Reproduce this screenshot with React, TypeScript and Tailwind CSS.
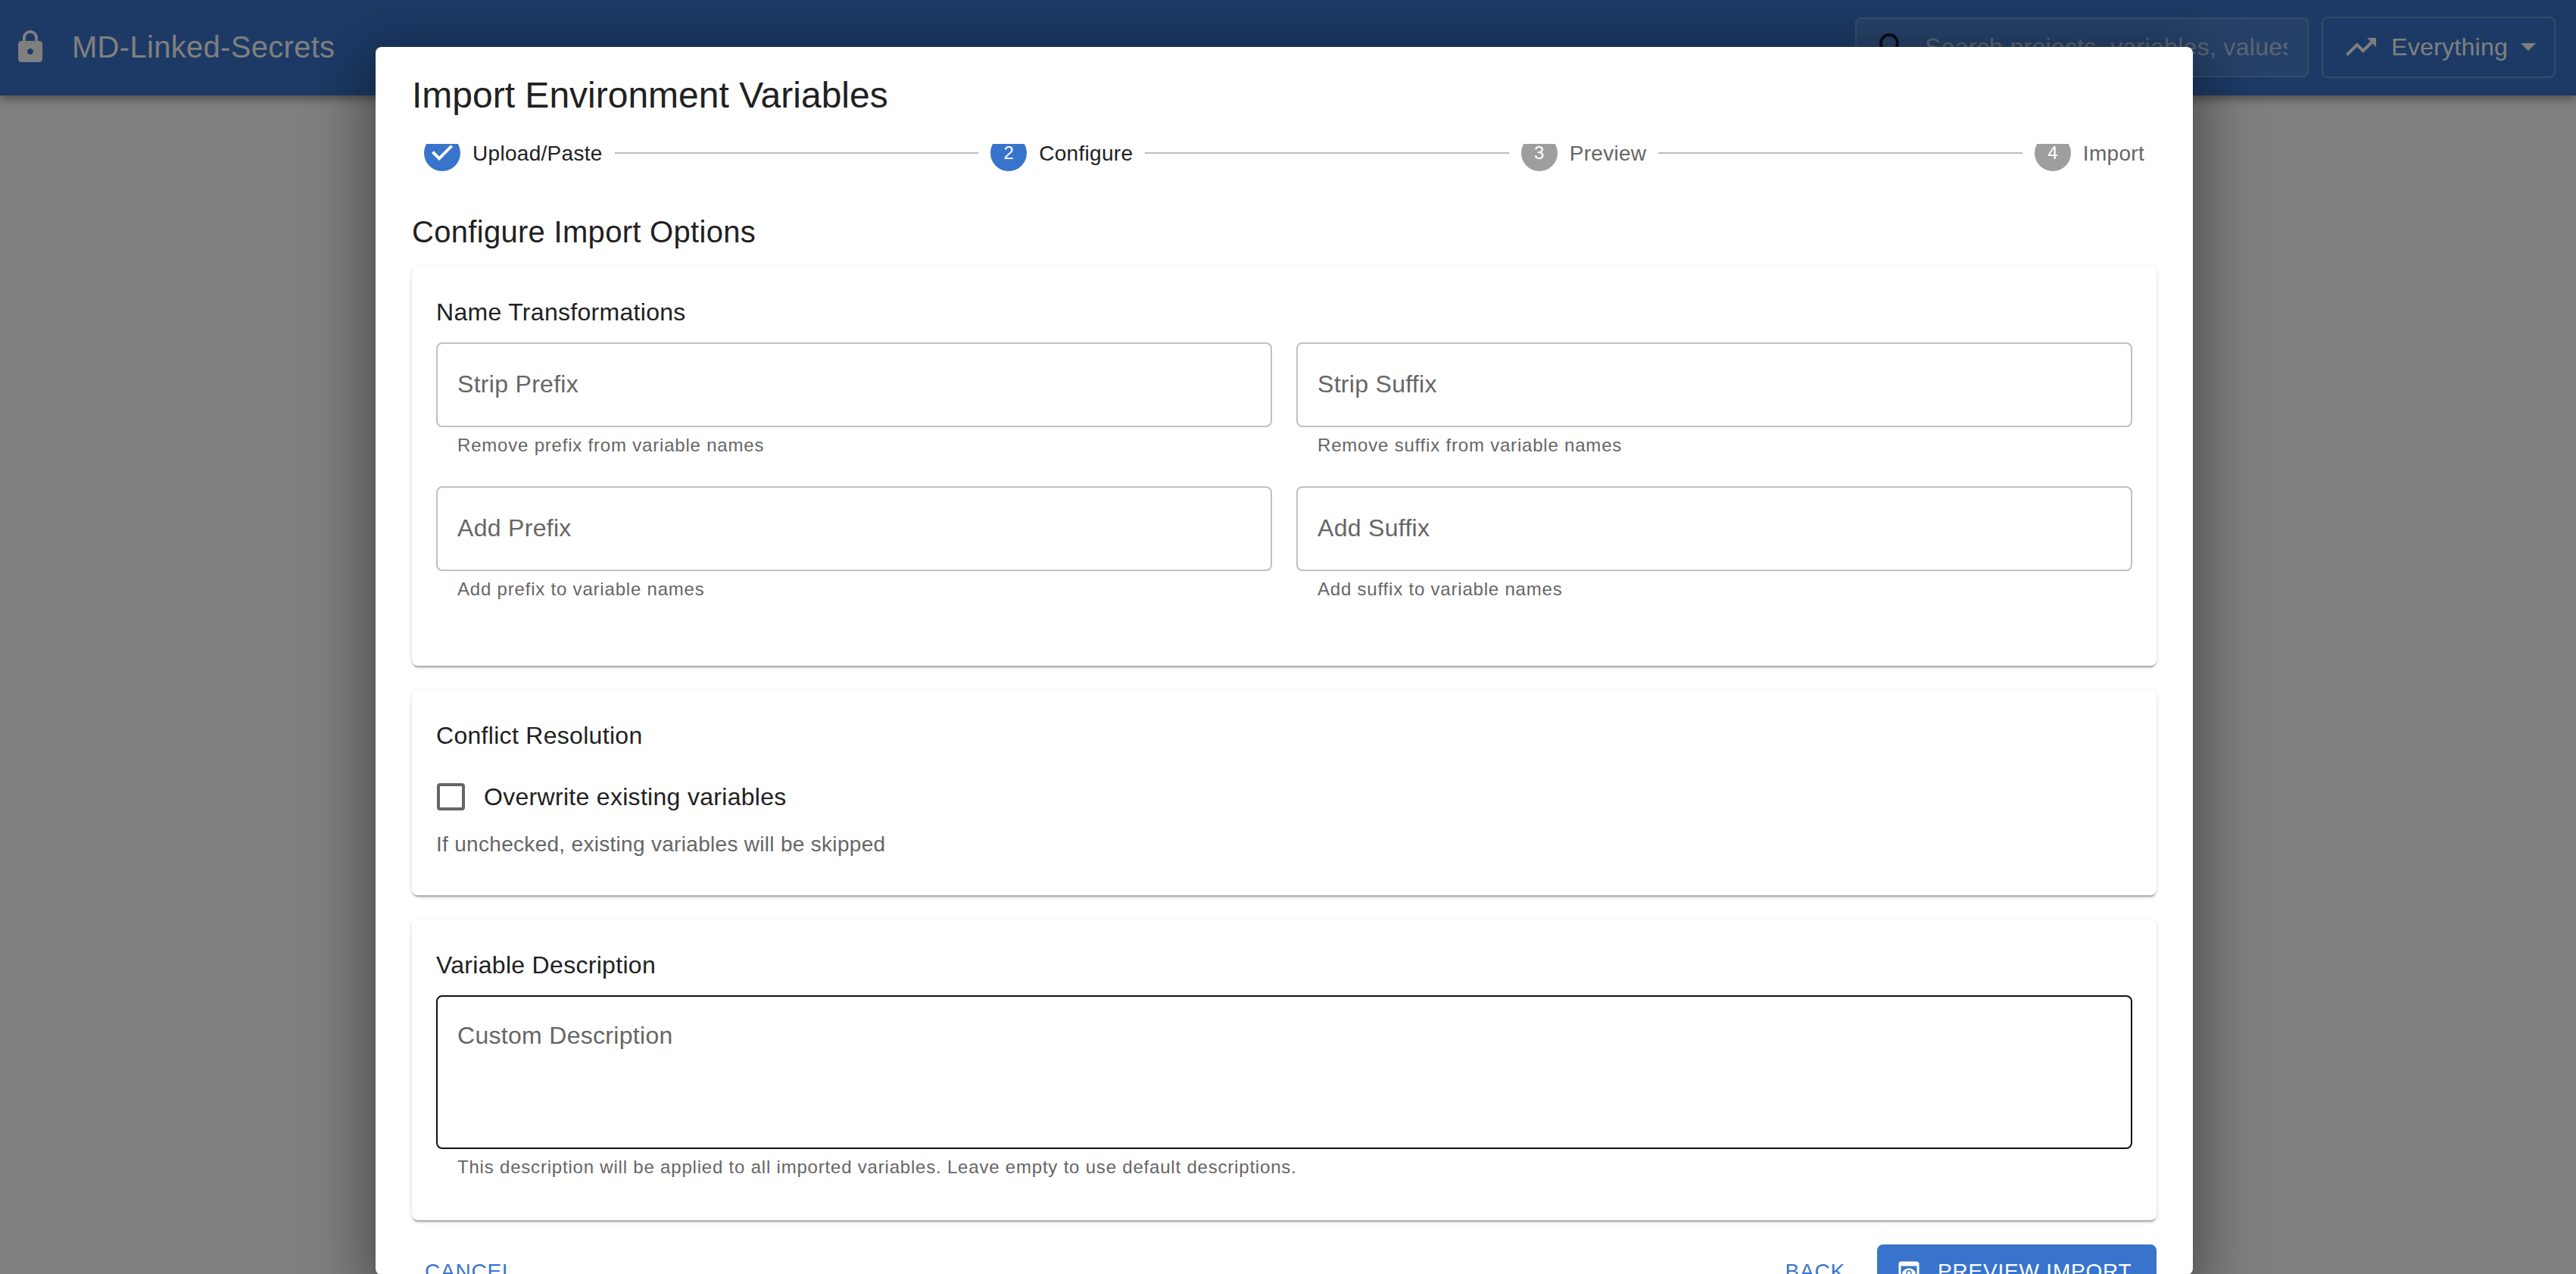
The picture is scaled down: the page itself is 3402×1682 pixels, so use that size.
const lockPath =
  "M18 8h-1V6c0-2.76-2.24-5-5-5S7 3.24 7 6v2H6c-1.1 0-2 .9-2 2v10c0 1.1.9 2 2 2h12c1.1 0 2-.9 2-2V10c0-1.1-.9-2-2-2zm-6 9c-1.1 0-2-.9-2-2s.9-2 2-2 2 .9 2 2-.9 2-2 2zm3.1-9H8.9V6c0-1.71 1.39-3.1 3.1-3.1 1.71 0 3.1 1.39 3.1 3.1v2z";
const searchPath =
  "M15.5 14h-.79l-.28-.27C15.41 12.59 16 11.11 16 9.5 16 5.91 13.09 3 9.5 3S3 5.91 3 9.5 5.91 16 9.5 16c1.61 0 3.09-.59 4.23-1.57l.27.28v.79l5 4.99L20.49 19l-4.99-5zm-6 0C7.01 14 5 11.99 5 9.5S7.01 5 9.5 5 14 7.01 14 9.5 11.99 14 9.5 14z";
const trendPath = "m16 6 2.29 2.29-4.88 4.88-4-4L2 16.59 3.41 18l6-6 4 4 6.3-6.29L22 12V6z";
const previewPath =
  "M19 3H5c-1.11 0-2 .9-2 2v14c0 1.1.89 2 2 2h14c1.1 0 2-.9 2-2V5c0-1.1-.89-2-2-2zm0 16H5V7h14v12zm-5.5-6c0 .83-.67 1.5-1.5 1.5s-1.5-.67-1.5-1.5.67-1.5 1.5-1.5 1.5.67 1.5 1.5zM12 9c-2.73 0-5.06 1.66-6 4 .94 2.34 3.27 4 6 4s5.06-1.66 6-4c-.94-2.34-3.27-4-6-4zm0 6.5c-1.38 0-2.5-1.12-2.5-2.5s1.12-2.5 2.5-2.5 2.5 1.12 2.5 2.5-1.12 2.5-2.5 2.5z";
const doneCirclePath = "M12 0a12 12 0 1 0 0 24 12 12 0 0 0 0-24zm-2 17l-5-5 1.4-1.4 3.6 3.6 7.6-7.6L19 8l-9 9z";

function Icon({ d, className }: { d: string; className?: string }) {
  return (
    <svg viewBox="0 0 24 24" fill="currentColor" className={className}>
      <path d={d} />
    </svg>
  );
}

function Field({ label, helper }: { label: string; helper: string }) {
  return (
    <div>
      <div className="h-[112px] flex items-center px-[26px] pb-[3px] border-2 border-[#c0c0c0] rounded-[8px] text-[32px] tracking-[0.3px] text-[#666666]">
        {label}
      </div>
      <p className="mt-[4px] px-[28px] text-[24px] leading-[40px] tracking-[0.8px] text-[#666666]">{helper}</p>
    </div>
  );
}

function Card({ title, className, children }: { title: string; className?: string; children: React.ReactNode }) {
  return (
    <section
      className={`rounded-[8px] bg-white px-[32px] pt-[32px] shadow-[0_4px_2px_-2px_rgba(0,0,0,0.2),0_2px_2px_0_rgba(0,0,0,0.14),0_2px_6px_0_rgba(0,0,0,0.12)] ${className ?? ""}`}
    >
      <h3 className="text-[32px] leading-[56px] tracking-[0.3px] text-[#212121] mb-[12px]">{title}</h3>
      {children}
    </section>
  );
}

function Step({ n, label, state }: { n: number; label: string; state: "done" | "active" | "todo" }) {
  return (
    <div className="flex items-center gap-[16px] shrink-0">
      {state === "done" ? (
        <Icon d={doneCirclePath} className="w-[48px] h-[48px] text-[#3874cb]" />
      ) : (
        <span
          className={`w-[48px] h-[48px] rounded-full flex items-center justify-center text-white text-[24px] ${
            state === "active" ? "bg-[#3874cb]" : "bg-[#9e9e9e]"
          }`}
        >
          {n}
        </span>
      )}
      <span className={`text-[28px] tracking-[0.3px] pt-[2px] ${state === "todo" ? "text-[#666666]" : "text-[#212121]"}`}>
        {label}
      </span>
    </div>
  );
}

function Line() {
  return <div className="flex-1 h-[2px] mx-[16px] bg-[#bdbdbd]" />;
}

export default function App() {
  return (
    <div className="relative h-[1682px] w-full overflow-hidden bg-white font-['Liberation_Sans',Arial,sans-serif]">
      {/* app bar */}
      <header className="h-[126px] pb-[2px] bg-[#3874cb] text-white flex items-center pl-[16px] pr-[27px] shadow-[0_4px_8px_-2px_rgba(0,0,0,0.2),0_8px_10px_0_rgba(0,0,0,0.14),0_2px_20px_0_rgba(0,0,0,0.12)]">
        <Icon d={lockPath} className="w-[48px] h-[48px]" />
        <span className="ml-[31px] text-[40px] tracking-[0.3px]">MD-Linked-Secrets</span>
        <div className="ml-auto flex items-center gap-[17px]">
          <div className="w-[599px] h-[79px] flex items-center pl-[24px] pr-[26px] border-2 border-white/20 rounded-[8px] bg-white/10">
            <Icon d={searchPath} className="w-[48px] h-[48px] text-[#0c1a30] shrink-0" />
            <span className="ml-[18px] text-[32px] tracking-[0.3px] text-white/60 whitespace-nowrap overflow-hidden">
              Search projects, variables, values, and more
            </span>
          </div>
          <div className="w-[309px] h-[81px] flex items-center pl-[26px] border-2 border-white/25 rounded-[8px]">
            <Icon d={trendPath} className="w-[48px] h-[48px] shrink-0" />
            <span className="ml-[16px] text-[32px] tracking-[0.3px]">Everything</span>
            <svg viewBox="0 0 20 10" fill="currentColor" className="ml-[17px] w-[20px] h-[10px]">
              <path d="M0 0h20L10 10z" />
            </svg>
          </div>
        </div>
      </header>

      {/* backdrop */}
      <div className="absolute inset-0 bg-black/50" />

      {/* dialog */}
      <div className="absolute left-[496px] top-[62px] w-[2400px] h-[1621px] rounded-[8px] bg-white overflow-hidden flex flex-col shadow-[0_22px_76px_14px_rgba(0,0,0,0.4)]">
        <h2 className="h-[128px] shrink-0 pl-[48px] pt-[32px] text-[48px] leading-[64px] text-[#212121]">
          Import Environment Variables
        </h2>
        <div className="overflow-hidden shrink-0">
          <div className="-mt-[12px] px-[48px] pb-[16px]">
            <div className="flex items-center h-[48px] px-[16px]">
              <Step n={1} label="Upload/Paste" state="done" />
              <Line />
              <Step n={2} label="Configure" state="active" />
              <Line />
              <Step n={3} label="Preview" state="todo" />
              <Line />
              <Step n={4} label="Import" state="todo" />
            </div>
            <h3 className="mt-[56px] text-[40px] leading-[48px] tracking-[0.3px] text-[#212121]">Configure Import Options</h3>
            <div className="mt-[22px] flex flex-col gap-[32px]">
              <Card title="Name Transformations" className="pb-[81px]">
                <div className="grid grid-cols-2 gap-x-[32px] gap-y-[34px]">
                  <Field label="Strip Prefix" helper="Remove prefix from variable names" />
                  <Field label="Strip Suffix" helper="Remove suffix from variable names" />
                  <Field label="Add Prefix" helper="Add prefix to variable names" />
                  <Field label="Add Suffix" helper="Add suffix to variable names" />
                </div>
              </Card>
              <Card title="Conflict Resolution" className="pb-[47px]">
                <div className="mt-[29px] flex items-center gap-[25px]">
                  <span className="w-[37px] h-[36px] ml-[1px] rounded-[4px] border-4 border-[#666666]" />
                  <span className="text-[32px] tracking-[0.3px] text-[#212121]">Overwrite existing variables</span>
                </div>
                <p className="mt-[19px] text-[28px] leading-[40px] tracking-[0.3px] text-[#666666]">
                  If unchecked, existing variables will be skipped
                </p>
              </Card>
              <Card title="Variable Description" className="pb-[50px]">
                <div className="h-[203px] px-[26px] pt-[33px] border-2 border-[#111111] rounded-[8px] text-[32px] leading-[36px] tracking-[0.3px] text-[#666666]">
                  Custom Description
                </div>
                <p className="mt-[4px] px-[28px] text-[24px] leading-[40px] tracking-[0.8px] text-[#666666]">
                  This description will be applied to all imported variables. Leave empty to use default descriptions.
                </p>
              </Card>
            </div>
          </div>
        </div>
        <footer className="mt-[16px] pl-[48px] pr-[48px] flex items-center shrink-0">
          <button className="h-[72px] px-[17px] text-[28px] tracking-[0.8px] text-[#3874cb]">CANCEL</button>
          <button className="ml-auto h-[72px] px-[16px] text-[28px] tracking-[0.8px] text-[#3874cb]">BACK</button>
          <button className="ml-[26px] w-[369px] h-[72px] flex items-center pl-[24px] rounded-[8px] bg-[#3874cb] text-white text-[28px] tracking-[0.8px]">
            <Icon d={previewPath} className="w-[36px] h-[36px] shrink-0" />
            <span className="ml-[20px]">PREVIEW IMPORT</span>
          </button>
        </footer>
      </div>
    </div>
  );
}
